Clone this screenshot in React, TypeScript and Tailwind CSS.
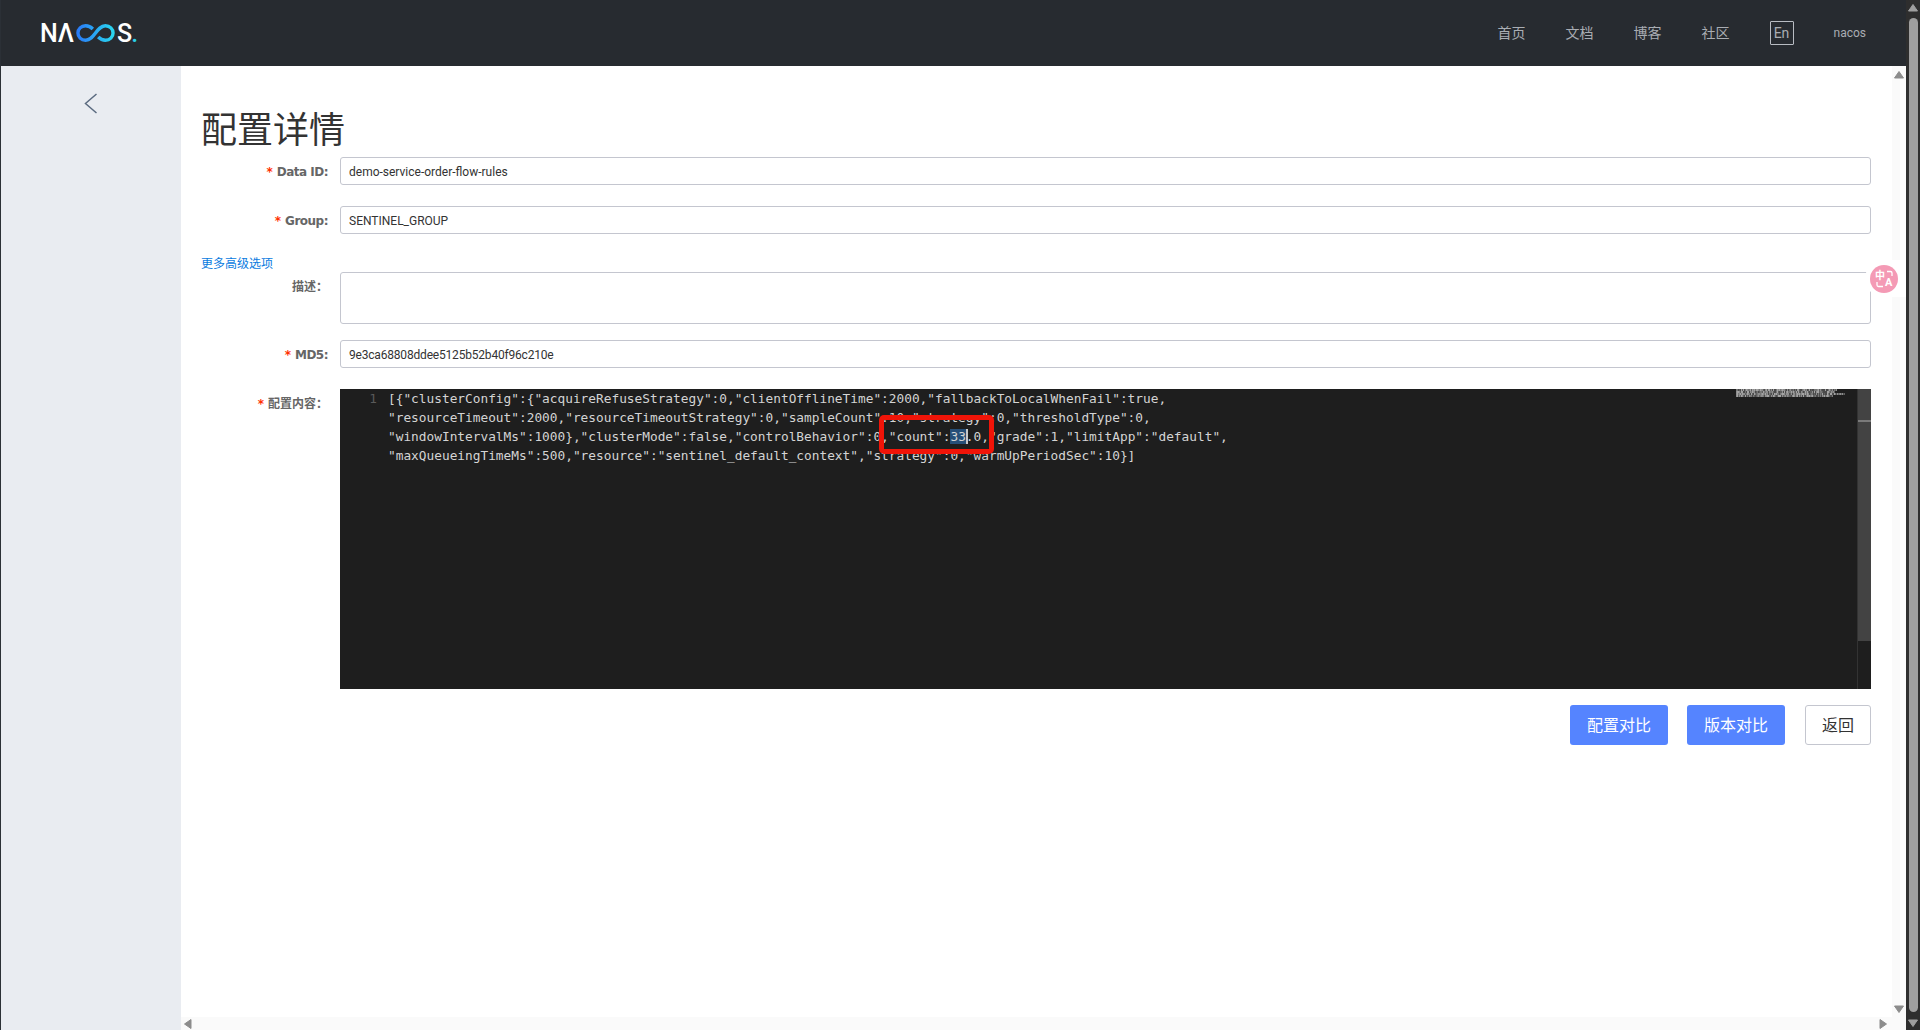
import type { ReactNode } from "react";

const SANS = "font-['Roboto','Noto_Sans_CJK_SC',sans-serif]";

const line3Before = '"windowIntervalMs":1000},"clusterMode":false,"controlBehavior":0,"count":';
const line3After = '.0,"grade":1,"limitApp":"default",';

const codeLines = [
  '[{"clusterConfig":{"acquireRefuseStrategy":0,"clientOfflineTime":2000,"fallbackToLocalWhenFail":true,',
  '"resourceTimeout":2000,"resourceTimeoutStrategy":0,"sampleCount":10,"strategy":0,"thresholdType":0,',
  line3Before + "33" + line3After,
  '"maxQueueingTimeMs":500,"resource":"sentinel_default_context","strategy":0,"warmUpPeriodSec":10}]',
];

// little triangles of the scrollbars
function Arrow({ dir, color = "#8c8c8c" }: { dir: "up" | "down" | "left" | "right"; color?: string }) {
  const pts = {
    up: "5,1.5 9.5,8 0.5,8",
    down: "0.5,2 9.5,2 5,8.5",
    left: "1.5,5 8,0.5 8,9.5",
    right: "2,0.5 8.5,5 2,9.5",
  }[dir];
  return (
    <svg width="10" height="10" viewBox="0 0 10 10" className="block">
      <polygon points={pts} fill={color} stroke={color} strokeLinejoin="round" />
    </svg>
  );
}

function Field({
  label,
  required,
  latin,
  children,
  className = "",
}: {
  label: string;
  required?: boolean;
  latin?: boolean;
  children: ReactNode;
  className?: string;
}) {
  return (
    <div className={`flex ${className}`}>
      <label className="w-[139px] shrink-0 pr-3 flex justify-end pt-[6px] font-['DejaVu_Sans','Noto_Sans_CJK_SC',sans-serif] text-[12px] leading-[18px] font-bold text-[#666666]">
        {required && <span className="text-[#ff3000] mr-[4px]">*</span>}
        <span className={latin ? "tracking-[-0.5px]" : ""}>{label}</span>
      </label>
      {children}
    </div>
  );
}

function TextBox({ value, className = "" }: { value: string; className?: string }) {
  return (
    <div className={`flex-1 h-[28px] border border-[#c4c6cf] rounded-[3px] px-2 text-[12px] leading-[27px] pt-[1px] text-[#333333] ${className}`}>
      {value}
    </div>
  );
}

// one small pixel per character, like the editor's overview
function Minimap() {
  return (
    <svg width="110" height="8" viewBox="0 0 110 8" className="absolute right-[25px] top-0">
      {codeLines.map((line, row) =>
        Array.from(line).map((ch, i) => (
          <rect
            key={`${row}-${i}`}
            x={i}
            y={row * 2}
            width="1"
            height="2"
            fill="#d4d4d4"
            opacity={0.25 + ((ch.charCodeAt(0) * 7 + i) % 5) * 0.12}
          />
        ))
      )}
    </svg>
  );
}

function CodeEditor() {
  return (
    <div className="flex-1 relative h-[300px] bg-[#1e1e1e] flex overflow-hidden">
      <div className="w-[48px] shrink-0 pr-[11px] text-right font-['DejaVu_Sans_Mono',monospace] text-[12.8px] leading-[19px] text-[#5a5a5a]">
        1
      </div>
      <div className="flex-1 font-['DejaVu_Sans_Mono',monospace] text-[12.8px] leading-[19px] text-[#d4d4d4] whitespace-pre">
        <div>{codeLines[0]}</div>
        <div>{codeLines[1]}</div>
        <div>
          {line3Before}
          <span className="bg-[#264f78] shadow-[2px_0_0_#c8c8c8]">33</span>
          {line3After}
        </div>
        <div>{codeLines[3]}</div>
      </div>

      <Minimap />

      {/* editor scrollbar */}
      <div className="absolute right-0 top-0 bottom-0 w-[14px] border-l border-[#333333]">
        <div className="h-[252px] bg-[#434343] relative">
          <div className="absolute left-0 right-0 top-[31px] h-[2px] bg-[#7a7a7a]" />
        </div>
      </div>

      {/* red mark over the count value */}
      <div className="absolute left-[539px] top-[26px] w-[115px] h-[39px] border-[5px] border-[#f01408] rounded-[5px]" />
    </div>
  );
}

export default function App() {
  return (
    <div className={`relative flex h-screen w-full overflow-hidden bg-white ${SANS}`}>
      <div className="flex-1 min-w-0 flex flex-col border-l border-[#2b3036]">
        {/* Top bar */}
        <header className="h-[66px] shrink-0 bg-[#272b30] flex items-center justify-between pl-[39px] pr-[40px]">
          <div className="flex items-center text-white font-medium text-[25px] leading-none">
            <span>N</span>
            <span>Λ</span>
            <svg width="41" height="18" viewBox="0 0 44 20" className="mx-[1px]">
              <defs>
                <linearGradient id="lg" x1="0" y1="0" x2="1" y2="0">
                  <stop offset="0" stopColor="#2a7cf7" />
                  <stop offset="1" stopColor="#29d6f0" />
                </linearGradient>
              </defs>
              <path
                d="M19 5.500C16.500 3 14 2 11 2 6 2 2.500 5.500 2.500 10s3.500 8 8.500 8c5 0 8-4 11-8s6-8 11-8 8.500 3.500 8.500 8-3.500 8-8.500 8c-3 0-5.500-1-8-3.500"
                fill="none"
                stroke="url(#lg)"
                strokeWidth="3.800"
              />
            </svg>
            <span>S</span>
            <span className="text-[#2ad0e8] -ml-[1px]">.</span>
          </div>
          <nav className="flex items-center gap-[40px] text-[14px] text-[#a9adb3]">
            <span>首页</span>
            <span>文档</span>
            <span>博客</span>
            <span>社区</span>
            <span className="w-[24px] h-[24px] border border-[#b8bcc2] rounded-[1px] flex items-center justify-center">En</span>
            <span className="text-[12px]">nacos</span>
          </nav>
        </header>

        <div className="flex-1 flex min-h-0">
          <aside className="w-[180px] shrink-0 bg-[#e9ecf1] flex justify-center pt-[27px]">
            <svg width="14" height="21" viewBox="0 0 14 21">
              <path d="M12.500 1 L1.500 10.500 L12.500 20" fill="none" stroke="#5b6b80" strokeWidth="1.500" />
            </svg>
          </aside>

          <div className="flex-1 min-w-0 flex flex-col">
            <div className="flex-1 flex min-h-0">
              <main className="flex-1 min-w-0 pl-[20px] pr-[21px]">
                <h1 className="mt-[40px] text-[36px] leading-[50px] text-[#333333] font-normal">配置详情</h1>
                <Field label="Data ID:" required latin className="mt-[1px]">
                  <TextBox value="demo-service-order-flow-rules" />
                </Field>
                <Field label="Group:" required latin className="mt-[21px]">
                  <TextBox value="SENTINEL_GROUP" />
                </Field>
                <a className="block mt-[21px] text-[12px] leading-[18px] text-[#0a7be0]">更多高级选项</a>
                <Field label="描述：" className="-mt-[1px]">
                  <div className="flex-1 h-[52px] border border-[#c4c6cf] rounded-[3px]" />
                </Field>
                <Field label="MD5:" required latin className="mt-[16px]">
                  <TextBox value="9e3ca68808ddee5125b52b40f96c210e" className="tracking-[-0.19px]" />
                </Field>
                <Field label="配置内容：" required className="mt-[21px]">
                  <CodeEditor />
                </Field>
                <div className="flex justify-end mt-[16px] text-[16px]">
                  <button className="w-[98px] h-[40px] pt-[1px] rounded-[3px] bg-[#5584ff] text-white">配置对比</button>
                  <button className="w-[98px] h-[40px] pt-[1px] rounded-[3px] bg-[#5584ff] text-white ml-[19px]">版本对比</button>
                  <button className="w-[66px] h-[40px] pt-[1px] rounded-[3px] border border-[#c4c6cf] bg-white text-[#333333] ml-[20px]">返回</button>
                </div>
              </main>
              <div className="w-[14px] shrink-0 bg-[#fafafa] flex flex-col justify-between items-center pt-[4px] pb-[3px]">
                <Arrow dir="up" />
                <Arrow dir="down" />
              </div>
            </div>
            <div className="h-[13px] shrink-0 bg-[#fafafa] flex items-center justify-between pl-[2px] pr-[18px]">
              <Arrow dir="left" />
              <Arrow dir="right" />
            </div>
          </div>
        </div>
      </div>

      {/* page scrollbar */}
      <div className="w-[14px] shrink-0 bg-[#2e2e2e] flex flex-col items-center justify-between pt-[3px] pb-[2px]">
        <Arrow dir="up" color="#9f9f9f" />
        <div className="flex-1 w-[9px] mt-[5px] mb-[6px] rounded-[5px] bg-[#9f9f9f]" />
        <Arrow dir="down" color="#9f9f9f" />
      </div>

      {/* floating translate button */}
      <div className="absolute right-[14px] top-[260px] w-[41px] h-[37px] bg-white rounded-l-[19px] flex items-center pl-[5px]">
        <div className="relative w-[28px] h-[28px] rounded-full bg-[#f49ab5] text-white font-bold">
          <span className="absolute left-[5px] top-[5px] text-[10px] leading-[12px]">中</span>
          <span className="absolute left-[15px] top-[12px] text-[11px] leading-[12px]">A</span>
          <svg width="28" height="28" viewBox="0 0 28 28" className="absolute inset-0">
            <path d="M17 6.500h3.500a1.500 1.500 0 0 1 1.500 1.500v3" fill="none" stroke="#ffffff" strokeWidth="1.300" />
            <path d="M7 17v3a1.500 1.500 0 0 0 1.500 1.500H13" fill="none" stroke="#ffffff" strokeWidth="1.300" />
          </svg>
        </div>
      </div>
    </div>
  );
}
